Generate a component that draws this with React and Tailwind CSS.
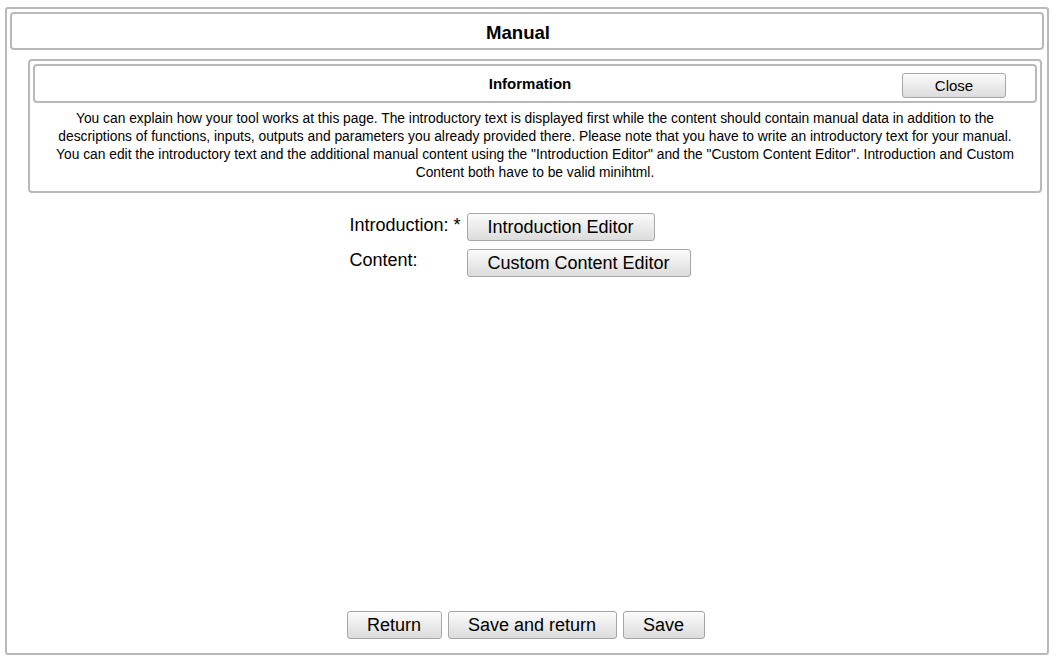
import React from 'react'

const Btn = ({ children, className = '' }) => (
  <button
    className={`border border-[#a6a6a6] rounded-[3px] bg-gradient-to-b from-[#fbfbfb] to-[#dcdcdc] text-black leading-none ${className}`}
  >
    {children}
  </button>
)

const App = () => {
  return (
    <div className="w-[1056px] h-[662px] bg-white pt-[7px] pl-[5px] font-['Liberation_Sans',Arial,sans-serif] text-black">
      <div className="w-[1044px] h-[648px] border-2 border-[#b9b9b9] rounded-[3px] p-[3px] flex flex-col">
        {/* Title */}
        <div className="h-[38px] border-2 border-[#b9b9b9] rounded-[4px] flex items-center justify-center pr-[18px] pt-[3px]">
          <span className="text-[18.6px] font-bold">Manual</span>
        </div>

        {/* Information */}
        <div className="mt-[9px] ml-[18px] mr-[2px] border-2 border-[#b9b9b9] rounded-[4px] p-[3px] pb-[9px]">
          <div className="h-[39px] border-2 border-[#b9b9b9] rounded-[4px] flex items-center relative">
            <span className="flex-1 text-center text-[15px] font-bold pr-[10px] pt-[2px]">Information</span>
            <Btn className="absolute right-[29px] top-[7px] w-[104px] h-[25px] text-[15px]">Close</Btn>
          </div>
          <p className="mt-[7px] text-center text-[13.8px] leading-[18px]">
            You can explain how your tool works at this page. The introductory text is displayed first while the content should contain manual data in addition to the
            <br />
            descriptions of functions, inputs, outputs and parameters you already provided there. Please note that you have to write an introductory text for your manual.
            <br />
            You can edit the introductory text and the additional manual content using the "Introduction Editor" and the "Custom Content Editor". Introduction and Custom
            <br />
            Content both have to be valid minihtml.
          </p>
        </div>

        {/* Form */}
        <div className="mt-[20px] flex justify-center pr-[14px]">
          <div className="grid grid-cols-[117px_auto] gap-y-[8px] items-start">
            <div className="text-[18px] leading-[20px] pt-[2px]">Introduction: *</div>
            <div>
              <Btn className="h-[28px] w-[188px] text-[18px]">Introduction Editor</Btn>
            </div>
            <div className="text-[18px] leading-[20px] pt-[1px]">Content:</div>
            <div>
              <Btn className="h-[28px] w-[224px] text-[18px]">Custom Content Editor</Btn>
            </div>
          </div>
        </div>

        {/* Bottom actions */}
        <div className="mt-auto mb-[11px] flex justify-center gap-[6px] pr-[3px]">
          <Btn className="h-[28px] w-[95px] text-[18px]">Return</Btn>
          <Btn className="h-[28px] w-[169px] text-[18px]">Save and return</Btn>
          <Btn className="h-[28px] w-[82px] text-[18px]">Save</Btn>
        </div>
      </div>
    </div>
  )
}

export default App
